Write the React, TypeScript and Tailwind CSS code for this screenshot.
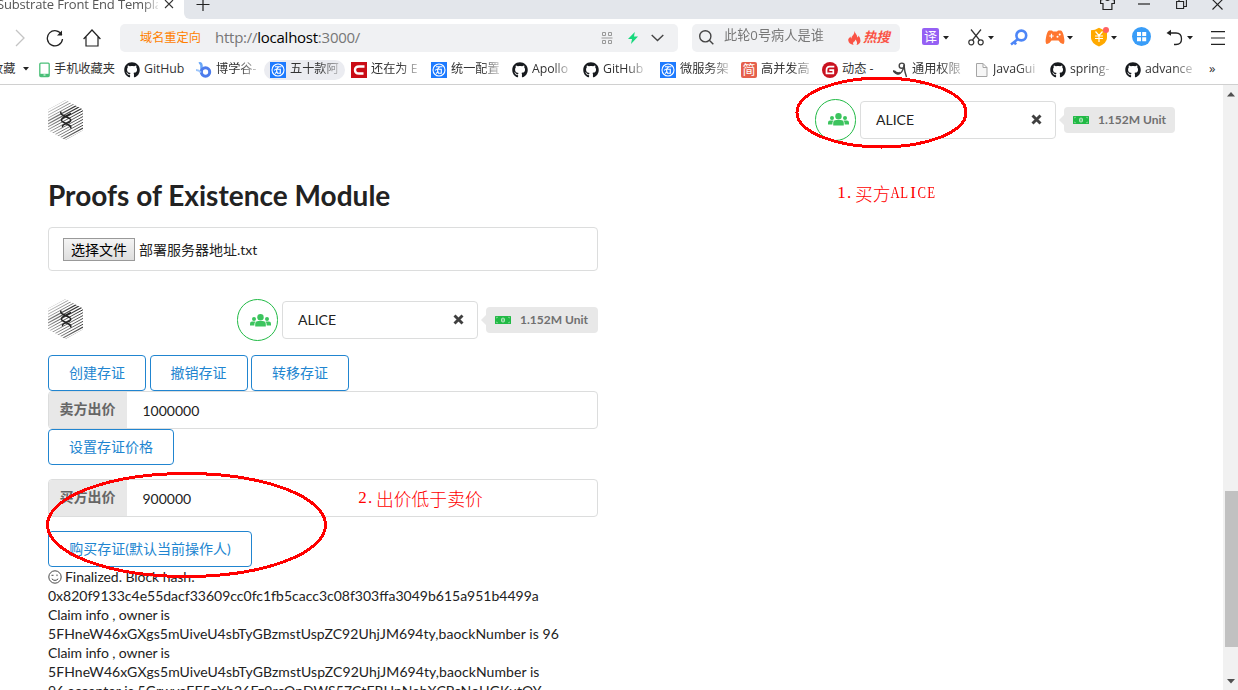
import React from "react";
import { FaGithub } from "react-icons/fa";

const UI = "font-['Open_Sans','Noto_Sans_CJK_SC',sans-serif]";
const BODY = "font-['Lato','Noto_Sans_CJK_SC',sans-serif]";

function Caret({ className = "" }: { className?: string }) {
  return (
    <svg width="6" height="4" viewBox="0 0 6 4" className={"shrink-0 " + className}>
      <path d="M0 0h6L3 3.5z" fill="#222" />
    </svg>
  );
}

function TabStrip() {
  return (
    <div className="flex h-[19px] shrink-0 bg-[#e3e6eb]">
      <div className="flex h-[19px] w-[184px] shrink-0 bg-white">
        <div className="-mt-[6px] -ml-[3px] h-[22px] w-[161px] overflow-hidden text-[13px] leading-[21px] tracking-[-0.16px] whitespace-nowrap text-[#555] [mask-image:linear-gradient(90deg,#000_90%,#0003_100%)]">
          Substrate Front End Templa
        </div>
        <svg width="10" height="10" viewBox="0 0 10 10" className="mt-[-1px] ml-[6px]" stroke="#333" strokeWidth="1.1">
          <path d="M1 1l8 8M9 1l-8 8" />
        </svg>
      </div>
      <div className="flex h-[19px] flex-1 bg-white">
        <div className="flex h-[19px] flex-1 rounded-bl-[6px] bg-[#e3e6eb]">
          <svg width="14" height="14" viewBox="0 0 14 14" className="mt-[-2px] ml-[12px]" stroke="#222" strokeWidth="1.2">
            <path d="M7 0v13M.5 6.5h13" />
          </svg>
          <div className="flex-1" />
          <svg width="15" height="12" viewBox="0 0 15 12" className="mr-[23px]" fill="none" stroke="#222" strokeWidth="1.2">
            <path d="M5 -1Q7.500 2 10 -1L14.400 0v3.500h-2.500v6H3v-6H.6V0z" />
          </svg>
          <svg width="12" height="12" viewBox="0 0 12 12" className="mr-[26px]" stroke="#222" strokeWidth="1.2">
            <path d="M0 4h12" />
          </svg>
          <svg width="11" height="11" viewBox="0 0 11 11" className="mr-[25px]" fill="none" stroke="#222" strokeWidth="1.1">
            <path d="M.6 1.500h7v7h-7zM3 1v-2h7.400v7.500H8" />
          </svg>
          <svg width="11" height="11" viewBox="0 0 11 11" className="mr-[15px] mt-[-1px]" stroke="#222" strokeWidth="1.1">
            <path d="M.5 .5l10 10M10.500 .5l-10 10" />
          </svg>
        </div>
      </div>
    </div>
  );
}

function Toolbar() {
  return (
    <div className="flex h-[36px] shrink-0 items-center pt-[2px] pb-px">
      <svg width="10" height="18" viewBox="0 0 10 18" className="ml-[15px]" fill="none" stroke="#c4c4c4" strokeWidth="1.3">
        <path d="M1 1l8 8-8 8" />
      </svg>
      <svg width="18" height="18" viewBox="0 0 18 18" className="ml-[21px]" fill="none" stroke="#222" strokeWidth="1.3">
        <path d="M15.800 6A7.600 7.600 0 1 0 16.500 10" />
        <path d="M16 1.500v5h-5z" fill="#222" stroke="none" />
      </svg>
      <svg width="18" height="18" viewBox="0 0 18 18" className="ml-[19px]" fill="none" stroke="#222" strokeWidth="1.2">
        <path d="M.6 10L9 1l8.400 9M3 8v9h12V8" />
      </svg>
      <div className="ml-[19px] flex h-[28px] w-[558px] shrink-0 items-center rounded-[5px] bg-[#f0f1f3]">
        <span className="mt-px ml-[20px] w-[75px] text-[12.2px] text-[#ff7f00]">域名重定向</span>
        <span className="w-[386px] pb-px text-[15px] tracking-[-0.25px] text-[#777]">
          http://<span className="text-black">localhost</span>:3000/
        </span>
        <svg width="13" height="12" viewBox="0 0 13 12" fill="none" stroke="#999" strokeWidth="1">
          <path d="M1.500 .5h3v3h-3zM7.500 .5h3v3h-3zM1.500 8.500h3v3h-3zM7.500 8.500h3v3h-3zM.5 6h11" />
        </svg>
        <svg width="10" height="12" viewBox="0 0 10 12" className="ml-[14px]" fill="#17d87c">
          <path d="M6.800 0L0 7h4L3 12l7-7.500H6z" />
        </svg>
        <svg width="13" height="8" viewBox="0 0 13 8" className="ml-[13px]" fill="none" stroke="#444" strokeWidth="1.4">
          <path d="M.7 1l5.800 5.500L12.300 1" />
        </svg>
      </div>
      <div className="ml-[14px] flex h-[28px] w-[208px] shrink-0 items-center rounded-[5px] bg-[#f0f1f3]">
        <svg width="15" height="15" viewBox="0 0 15 15" className="ml-[7px] shrink-0" fill="none" stroke="#444" strokeWidth="1.4">
          <circle cx="6.300" cy="6.300" r="5.600" />
          <path d="M10.300 10.300l4 4" />
        </svg>
        <span className="-mt-[3px] ml-[10px] w-[124px] shrink-0 overflow-hidden text-[13.200px] whitespace-nowrap text-[#777] [mask-image:linear-gradient(90deg,#000_75%,#0008_83%)]">
          此轮0号病人是谁
        </span>
        <svg width="13" height="14" viewBox="0 0 13 14" fill="#fa5345" className="shrink-0">
          <path d="M6.500 0C7 2.500 9.500 4 9.300 6.500Q10.500 6 10.500 4.500 13 7.500 12.500 10 12 13 8.500 14 10 11.500 7.500 8.500 7 10.500 5.500 11 4.500 12 5.500 14 1 13 .3 9.800 0 7.500 2.500 5.500 2.500 7 3.500 7.500 3.500 5.500 5.500 3.500 6.500 2.500 6.500 0z" />
        </svg>
        <span className="ml-[2px] text-[13.5px] font-bold tracking-[-0.3px] whitespace-nowrap text-[#fa5345] italic">热搜</span>
      </div>
      <div className="-mt-[2px] ml-[22px] flex size-[17px] items-center justify-center rounded-[2px] bg-[#9560f4] text-[13px] text-white">译</div>
      <Caret className="ml-[4px]" />
      <svg width="16" height="17" viewBox="0 0 16 17" className="ml-[19px]" fill="none" stroke="#333" strokeWidth="1.200">
        <circle cx="3.300" cy="13.300" r="2.500" />
        <circle cx="12.700" cy="13.300" r="2.500" />
        <path d="M3 .5l8.500 10.500M13 .5L4.500 11" />
      </svg>
      <Caret className="ml-[4px]" />
      <svg width="18" height="17" viewBox="0 0 18 17" className="ml-[16px]" fill="none" stroke="#4d86f7">
        <circle cx="11.300" cy="6.500" r="4.900" strokeWidth="2.600" />
        <path d="M8 10l-7 5.500M4 12.500l2 3" strokeWidth="2.500" />
      </svg>
      <svg width="20" height="15" viewBox="0 0 20 15" className="ml-[17px]">
        <path d="M4 .5h3l1 1h4l1-1h3q2 1 3 7 1 5-.5 6.500-2.500.5-5-3.500h-7q-2.500 4-5 3.500Q0 12.500 1 7.500 2 1.500 4 .5z" fill="#ff762f" />
        <path d="M4.300 6h4.400M6.500 3.800v4.400" stroke="#fff" strokeWidth="1.200" />
        <circle cx="12.500" cy="6.800" r="1" fill="#fff" />
        <circle cx="14.700" cy="4.600" r="1" fill="#fff" />
      </svg>
      <Caret className="ml-[2px]" />
      <svg width="19" height="20" viewBox="0 0 19 20" className="ml-[17px] -mt-[2px]">
        <path d="M9 .8q4 2.500 8 2.500V11q0 5-8 8.500Q1 16 1 11V3.300Q5 3.300 9 .8z" fill="#ffa900" />
        <path d="M5.500 4.500L9 8.500l3.500-4M5 9h8M5 11.500h8M9 8.500V15" fill="none" stroke="#fff" strokeWidth="1.200" />
        <circle cx="16" cy="3" r="3" fill="#ff6161" />
      </svg>
      <Caret className="ml-[2px]" />
      <svg width="19" height="19" viewBox="0 0 19 19" className="ml-[15px] -mt-[2px]">
        <circle cx="9.500" cy="9.500" r="9.500" fill="#399df8" />
        <path d="M5 5h4v4H5zM10.200 5h4v4h-4zM5 10.200h4v4H5zM10.200 10.200h4v4h-4z" fill="#fff" />
      </svg>
      <svg width="17" height="17" viewBox="0 0 17 17" className="ml-[15px]" fill="none" stroke="#222" strokeWidth="1.300">
        <path d="M3 4h7q5.500 0 5.500 6 0 5.500-5.500 5.500H8" />
        <path d="M5 .8v6L.5 4z" fill="#222" stroke="none" />
      </svg>
      <Caret className="ml-[4px]" />
      <svg width="14" height="14" viewBox="0 0 14 14" className="ml-[18px]" stroke="#222" strokeWidth="1.200">
        <path d="M0 .7h14M0 7h14M0 13.300h14" />
      </svg>
    </div>
  );
}

const BlueIcon = () => (
  <svg width="16" height="16" viewBox="0 0 16 16">
    <rect width="16" height="16" fill="#1e7bff" />
    <circle cx="8" cy="8" r="6" fill="none" stroke="#fff" strokeWidth="1.100" />
    <path d="M5 4.800h6.500M8.800 4.800Q7 7.500 4 8.300M6.300 7.300h4v4H7.500zM7 9q-.8 2-2 2.600" fill="none" stroke="#fff" strokeWidth="1.100" />
  </svg>
);
const Hub = () => <FaGithub className="size-[16px] text-[#171a1e]" />;
const PhoneIcon = () => (
  <svg width="11" height="16" viewBox="0 0 11 16">
    <rect x=".8" y="1.200" width="9.400" height="13.300" rx="1" fill="none" stroke="#4abf78" strokeWidth="1.300" />
    <path d="M1 11.800h9v2.700H1z" fill="#4abf78" />
    <path d="M4.500 13h2" stroke="#fff" />
  </svg>
);
const BIcon = () => (
  <svg width="16" height="16" viewBox="0 0 16 16" fill="none">
    <path d="M3 1.500q2-1 2.500 2v7" stroke="#69a7f8" strokeWidth="2.500" />
    <circle cx="9.500" cy="10" r="4.200" stroke="#4d7cec" strokeWidth="3" />
    <path d="M0 8q3 0 5 2.500" stroke="#9dc5fb" strokeWidth="2" />
  </svg>
);
const CIcon = () => (
  <svg width="16" height="16" viewBox="0 0 16 16">
    <rect width="16" height="16" fill="#ca0c16" />
    <path d="M13.500 4.500H8Q4 4.500 4 8t4 3.500h4.500" fill="none" stroke="#fff" strokeWidth="2.400" />
  </svg>
);
const JianIcon = () => (
  <span className="flex size-[16px] items-center justify-center rounded-[2px] bg-[#e5604c] text-[13px] leading-none text-white">简</span>
);
const GIcon = () => (
  <svg width="16" height="16" viewBox="0 0 16 16">
    <circle cx="8" cy="8" r="8" fill="#c9121f" />
    <path d="M12.300 4.700H7.500q-3 0-3 3.300v3.300h6.800V8.200H7.300" fill="none" stroke="#fff" strokeWidth="1.700" />
  </svg>
);
const FigureIcon = () => (
  <svg width="15" height="16" viewBox="0 0 15 16" fill="none" stroke="#444" strokeWidth="1.400">
    <circle cx="8.800" cy="3.700" r="2.600" />
    <path d="M0 8.500q4 5.500 7.500 2.500 3-2.500 3.500-8 .5 7 2.500 12" />
    <path d="M1 9q3 3 6 1.800" strokeWidth="2" />
  </svg>
);
const FileIcon = () => (
  <svg width="12" height="15" viewBox="0 0 12 15" fill="#f6f6f6" stroke="#a5a5a5" strokeWidth="1">
    <path d="M.5 1.500h6.500l4 4v9H.5zM7 1.500v4h4" />
  </svg>
);

type Mark = { icon: React.ReactNode; gap: string; text: string; box: string; fade?: boolean; pill?: boolean; lat?: boolean };
const marks: Mark[] = [
  { icon: <PhoneIcon />, gap: "ml-[4px]", text: "手机收藏夹", box: "w-[85px]" },
  { icon: <Hub />, gap: "ml-[4px]", text: "GitHub", box: "w-[72px]", lat: true },
  { icon: <BIcon />, gap: "ml-[4px]", text: "博学谷-", box: "w-[74px]", fade: true },
  { icon: <BlueIcon />, gap: "ml-[4px]", text: "五十款阿", box: "w-[81px]", fade: true, pill: true },
  { icon: <CIcon />, gap: "ml-[4px]", text: "还在为 E", box: "w-[80px]", fade: true },
  { icon: <BlueIcon />, gap: "ml-[4px]", text: "统一配置", box: "w-[81px]", fade: true },
  { icon: <Hub />, gap: "ml-[4px]", text: "Apollo", box: "w-[71px]", fade: true, lat: true },
  { icon: <Hub />, gap: "ml-[4px]", text: "GitHub", box: "w-[77px]", fade: true, lat: true },
  { icon: <BlueIcon />, gap: "ml-[4px]", text: "微服务架", box: "w-[81px]", fade: true },
  { icon: <JianIcon />, gap: "ml-[4px]", text: "高并发高", box: "w-[81px]", fade: true },
  { icon: <GIcon />, gap: "ml-[4px]", text: "动态 -", box: "w-[71px]" },
  { icon: <FigureIcon />, gap: "ml-[4px]", text: "通用权限", box: "w-[83px]", fade: true },
  { icon: <FileIcon />, gap: "ml-[5px]", text: "JavaGui", box: "w-[74px]", fade: true, lat: true },
  { icon: <Hub />, gap: "ml-[4px]", text: "spring-", box: "w-[75px]", fade: true, lat: true },
  { icon: <Hub />, gap: "ml-[4px]", text: "advance", box: "w-[84px]", fade: true, lat: true },
];

function Bookmarks() {
  return (
    <div className="flex h-[30px] shrink-0 items-center border-b border-[#d0d0d0] text-[12.2px] whitespace-nowrap text-[#333]">
      <div className="flex w-[39px] shrink-0 items-center">
        <span className="-ml-[9px] w-[32px]">收藏</span>
        <Caret />
      </div>
      {marks.map((m, i) => (
        <div key={i} className={"flex h-[20px] shrink-0 items-center " + m.box}>
          <div className={"flex h-[20px] items-center " + (m.pill ? "-ml-[6px] w-[81px] shrink-0 rounded-full bg-[#ebecf1] pl-[6px]" : "")}>
            <span className="shrink-0">{m.icon}</span>
            <span
              className={
                m.gap +
                " shrink-0 pb-px leading-[18px] " +
                (m.lat ? "text-[12.3px] tracking-[-0.05px] " : "") +
                (m.fade ? "[mask-image:linear-gradient(90deg,#000_60%,#0004_100%)]" : "")
              }
            >
              {m.text}
            </span>
          </div>
        </div>
      ))}
      <span className="pb-[3px] text-[13px] leading-none">»</span>
    </div>
  );
}

const hexWeights = [0.3, 0.4, 0.5, 0.6, 0.7, 1.2, 1.2, 1.1, 1, 0.9, 0.9, 0.9, 0.9, 1, 1.1, 1.3, 1.5];

function Logo() {
  return (
    <svg width="35" height="40" viewBox="0 0 35 40" className="shrink-0">
      <clipPath id="hex">
        <path d="M17.500 0L35 9.500v20.800L17.500 40 0 30.300V9.500z" />
      </clipPath>
      <linearGradient id="hexInk" gradientUnits="userSpaceOnUse" x1="0" y1="40" x2="35" y2="20">
        <stop offset="0" stopColor="#bbb" />
        <stop offset=".35" stopColor="#777" />
        <stop offset="1" stopColor="#333" />
      </linearGradient>
      <g clipPath="url(#hex)">
        {hexWeights.map((w, i) => (
          <path key={i} d={`M0 ${6.500 + i * 2.9}L35 ${-12.5 + i * 2.9}`} stroke="url(#hexInk)" strokeWidth={w} />
        ))}
      </g>
      <g fill="none" stroke="#222" strokeWidth="1.500">
        <path d="M13 11.500q-1 2.500 2.500 4l6 3q2.500 1.700 0 3.500l-5.500 2.700q-2 1-1.500 2.500M23 13.500l-7.500 4q-3.500 2-1 4.200l7 3.800q2 1.200 1 3" />
      </g>
    </svg>
  );
}

function UsersIcon() {
  return (
    <svg width="21" height="13" viewBox="0 0 21 13" fill="#3cc45e">
      <circle cx="10.500" cy="3.200" r="3.200" />
      <circle cx="4" cy="5" r="2" />
      <circle cx="17" cy="5" r="2" />
      <path d="M5.200 12.500V10q0-3 3.300-3h4q3.300 0 3.300 3v2.500zM0 11.500V9.700Q0 7.500 2 7.500h3.500Q4.300 8.500 4.300 11.500zM21 11.500V9.700q0-2.200-2-2.200h-3.500q1.200 1 1.200 4z" />
    </svg>
  );
}

function MoneyIcon() {
  return (
    <svg width="16" height="8" viewBox="0 0 16 8" className="shrink-0">
      <rect width="16" height="8" rx=".5" fill="#21ba45" />
      <path d="M1.500 2.300V1.300H3M13 1.300h1.500v1M1.500 5.700v1H3M13 6.700h1.500v-1" fill="none" stroke="#9bdcaa" strokeWidth=".7" />
      <ellipse cx="8" cy="4" rx="2" ry="2.500" fill="#c4e9cc" />
      <path d="M8 2.500v3" stroke="#21ba45" strokeWidth="1.200" />
    </svg>
  );
}

function AccountBar({ badge }: { badge: string }) {
  return (
    <div className="flex items-center">
      <div className="flex h-[42px] w-[41px] items-center justify-center rounded-full border border-[#21ba45] pl-[5px]">
        <UsersIcon />
      </div>
      <div className="ml-[4px] flex h-[38px] w-[196px] items-center justify-between rounded-[4px] border border-[#dcdddd] pr-[13px] pb-px pl-[15px] text-[14px] text-[#222]">
        ALICE
        <svg width="11" height="11" viewBox="0 0 11 11" stroke="#404040" strokeWidth="2.900">
          <path d="M1.500 1.500l8 8M9.500 1.500l-8 8" />
        </svg>
      </div>
      <div className="ml-[3px] flex items-center">
        <svg width="5" height="10" viewBox="0 0 5 10">
          <path d="M5 0v10L0 5z" fill="#e8e8e8" />
        </svg>
        <div className={"flex h-[26px] items-center rounded-[4px] bg-[#e8e8e8] pl-[9px] text-[12px] font-bold text-[#707070] " + badge}>
          <MoneyIcon />
          <span className="ml-[9px] whitespace-nowrap">1.152M Unit</span>
        </div>
      </div>
    </div>
  );
}

function OutlineButton({ children, width }: { children: React.ReactNode; width: string }) {
  return (
    <button className={"flex h-[36px] items-center justify-center rounded-[4px] border border-[#2185d0] pb-[2px] text-[14px] whitespace-nowrap text-[#2185d0] " + width}>
      {children}
    </button>
  );
}

function PriceInput({ label, value }: { label: string; value: string }) {
  return (
    <div className="flex h-[38px] w-[550px] shrink-0 overflow-hidden rounded-[4px] border border-[#dcdddd]">
      <div className="-m-px flex w-[79px] items-center justify-center bg-[#e8e8e8] pb-[4px] text-[14px] font-bold text-[#666]">{label}</div>
      <div className="flex items-center pt-px pl-[16.500px] text-[14px] text-[#222]">{value}</div>
    </div>
  );
}

function Note({ cells, cjk, tail = "" }: { cells: string; cjk: string; tail?: string }) {
  const cell = (c: string, i: number) => (
    <span key={i} className={"flex w-[9px] font-['Liberation_Serif',serif] text-[17px] " + (c === "." ? "justify-start pl-[1px]" : "justify-center")}>
      <span className={"ALCE".includes(c) ? "scale-x-[0.75]" : ""}>{c}</span>
    </span>
  );
  return (
    <div className="flex items-center leading-[20px] text-[#f00]">
      {cells.split("").map(cell)}
      <span className="font-['Noto_Sans_CJK_SC',sans-serif] text-[17.800px] font-light">{cjk}</span>
      {tail.split("").map(cell)}
    </div>
  );
}

function Page() {
  return (
    <div className={"flex h-[605px] shrink-0 overflow-hidden " + BODY}>
      <main className="flex h-[605px] w-[1223px] shrink-0 flex-col items-start overflow-hidden pl-[48px]">
        <div className="flex h-[69px] w-[1127px] shrink-0 items-center justify-between">
          <Logo />
          <AccountBar badge="w-[111px]" />
        </div>
        <h1 className="mt-[23px] h-[36px] shrink-0 text-[28px] leading-[36px] font-bold tracking-[0.01px] text-[#222]">
          Proofs of Existence Module
        </h1>
        <div className="mt-[14px] flex h-[44px] w-[550px] shrink-0 items-center rounded-[4px] border border-[#dcdddd] pl-[14px] text-[14px] text-[#222]">
          <button className="flex h-[23px] w-[72px] items-center justify-center border border-[#999] bg-linear-to-b from-[#f4f4f4] to-[#dedede] text-[14px] text-black">
            选择文件
          </button>
          <span className="mt-px ml-[4px]">部署服务器地址.txt</span>
        </div>
        <div className="mt-[28px] flex h-[42px] w-[550px] shrink-0 items-center justify-between">
          <div className="-mt-[2px]">
            <Logo />
          </div>
          <AccountBar badge="w-[112px]" />
        </div>
        <div className="mt-[14px] flex shrink-0 gap-[3.500px]">
          <OutlineButton width="w-[98px]">创建存证</OutlineButton>
          <OutlineButton width="w-[98px]">撤销存证</OutlineButton>
          <OutlineButton width="w-[98px]">转移存证</OutlineButton>
        </div>
        <PriceInput label="卖方出价" value="1000000" />
        <OutlineButton width="w-[126px] shrink-0">设置存证价格</OutlineButton>
        <div className="mt-[14px] mb-[14px] shrink-0">
          <PriceInput label="买方出价" value="900000" />
        </div>
        <OutlineButton width="w-[204px] shrink-0">购买存证(默认当前操作人)</OutlineButton>
        <div className="w-[550px] shrink-0 text-[14px] leading-[19px] whitespace-nowrap text-[#222]">
          <div className="flex items-center tracking-[-0.05px]">
            <svg width="14" height="14" viewBox="0 0 14 14" className="mr-[3px]" fill="none" stroke="#333" strokeWidth=".9">
              <circle cx="7" cy="7" r="6.200" />
              <path d="M3.800 8.800q3.200 3.200 6.400 0M3.500 5.300h2M9 4.500v1.600" />
            </svg>
            Finalized. Block hash:
          </div>
          <div>0x820f9133c4e55dacf33609cc0fc1fb5cacc3c08f303ffa3049b615a951b4499a</div>
          <div className="tracking-[-0.1px]">Claim info , owner is</div>
          <div className="tracking-[0.06px]">5FHneW46xGXgs5mUiveU4sbTyGBzmstUspZC92UhjJM694ty,baockNumber is 96</div>
          <div className="tracking-[-0.1px]">Claim info , owner is</div>
          <div className="tracking-[0.07px]">5FHneW46xGXgs5mUiveU4sbTyGBzmstUspZC92UhjJM694ty,baockNumber is</div>
          <div className="tracking-[0.08px]">96,accepter is 5GrwvaEF5zXb26Fz9rcQpDWS57CtERHpNehXCPcNoHGKutQY</div>
        </div>
      </main>
      <div className="flex h-[605px] w-[15px] flex-col items-end bg-[#f1f1f1]">
        <svg width="8" height="5" viewBox="0 0 8 5" className="mt-[7px] mr-[3px]">
          <path d="M0 4.500h8L4 0z" fill="#505050" />
        </svg>
        <div className="mt-[394px] h-[156px] w-[13px] bg-[#c1c1c1]" />
        <svg width="8" height="5" viewBox="0 0 8 5" className="mt-[32px] mr-[3px]">
          <path d="M0 0h8L4 4.500z" fill="#505050" />
        </svg>
      </div>
    </div>
  );
}

export default function App() {
  return (
    <div className={"relative flex h-[690px] w-[1238px] flex-col overflow-hidden bg-white " + UI}>
      <TabStrip />
      <Toolbar />
      <Bookmarks />
      <Page />
      <svg width="1238" height="690" viewBox="0 0 1238 690" className="pointer-events-none absolute inset-0" fill="none" stroke="#f00" strokeWidth="3" shapeRendering="crispEdges">
        <ellipse cx="881.500" cy="112.500" rx="84.500" ry="34.500" />
        <ellipse cx="186.500" cy="525" rx="139" ry="51.500" />
      </svg>
      <div className="absolute top-[183px] left-[837px]">
        <Note cells="1." cjk="买方" tail="ALICE" />
      </div>
      <div className="absolute top-[488px] left-[358px]">
        <Note cells="2." cjk="出价低于卖价" />
      </div>
    </div>
  );
}
